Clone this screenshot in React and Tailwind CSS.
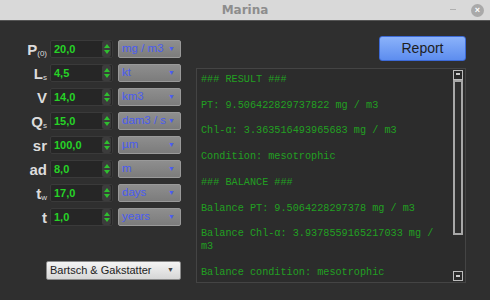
import React from 'react';

const rows = [
  { label: 'P', sub: '(0)', value: '20,0', unit: 'mg / m3' },
  { label: 'L', sub: 's', value: '4,5', unit: 'kt' },
  { label: 'V', sub: '', value: '14,0', unit: 'km3' },
  { label: 'Q', sub: 's', value: '15,0', unit: 'dam3 / s' },
  { label: 'sr', sub: '', value: '100,0', unit: 'µm' },
  { label: 'ad', sub: '', value: '8,0', unit: 'm' },
  { label: 't', sub: 'w', value: '17,0', unit: 'days' },
  { label: 't', sub: '', value: '1,0', unit: 'years' },
];

const lines = [
  '### RESULT ###',
  '',
  'PT: 9.506422829737822 mg / m3',
  '',
  'Chl-α: 3.363516493965683 mg / m3',
  '',
  'Condition: mesotrophic',
  '',
  '### BALANCE ###',
  '',
  'Balance PT: 9.5064228297378 mg / m3',
  '',
  'Balance Chl-α: 3.9378559165217033 mg /',
  'm3',
  '',
  'Balance condition: mesotrophic',
];

function Spin() {
  return (
    <div className="flex flex-col items-center justify-center w-[9px] h-[16px] bg-[#3c3c3c] rounded-[2px] gap-[2px]">
      <div className="w-0 h-0 border-l-[3px] border-r-[3px] border-b-[4px] border-l-transparent border-r-transparent border-b-[#2fbf2f]" />
      <div className="w-0 h-0 border-l-[3px] border-r-[3px] border-t-[4px] border-l-transparent border-r-transparent border-t-[#2fbf2f]" />
    </div>
  );
}

function Row({ label, sub, value, unit }) {
  return (
    <div className="flex items-center h-[18px]">
      <div className="w-[50px] pr-[3px] flex justify-end items-end text-[#dcdcdc] font-bold text-[15px] leading-none">
        <span>{label}</span>
        {sub && <span className="text-[8px] leading-none font-normal mb-[-1px]">{sub}</span>}
      </div>
      <div className="flex items-center justify-between w-[63px] h-[18px] bg-[#262626] border border-[#3a3a3a] rounded-[2px] pl-[3px] pr-[1px]">
        <span className="text-[#26d326] font-bold text-[11px]">{value}</span>
        <Spin />
      </div>
      <div className="ml-[5px] flex items-center justify-between w-[63px] h-[18px] rounded-[2px] border border-[#9a9a9a] bg-gradient-to-b from-[#8e8e8e] to-[#7c7c7c] px-[3px]">
        <span className="text-[#4a5cf0] text-[11.5px] whitespace-nowrap">{unit}</span>
        <span className="text-[#4a5cf0] text-[7px] mr-[2px]">▼</span>
      </div>
    </div>
  );
}

export default function App() {
  return (
    <div className="w-[490px] h-[300px] bg-[#2f2f2f] flex flex-col overflow-hidden" style={{ fontFamily: '"Liberation Sans", Arial, sans-serif' }}>
      <div className="relative h-[21px] bg-[#d9d9d9] border-b-[1px] border-[#555] flex items-center justify-center shrink-0">
        <span className="text-[#8d8d8d] font-bold text-[12px]" style={{ fontFamily: '"DejaVu Sans", sans-serif' }}>Marina</span>
        <span className="absolute left-[450px] top-[9px] w-[6px] h-[1px] bg-[#b0b0b0]" />
        <span className="absolute left-[471px] top-[4px] w-[13px] h-[13px] rounded-full bg-[#a9a9a9] flex items-center justify-center text-white text-[9px] font-bold leading-none">×</span>
      </div>
      <div className="flex flex-1">
        <div className="flex flex-col w-[190px] pt-[19px]">
          <div className="flex flex-col gap-[6px]">
            {rows.map((r, i) => (
              <Row key={i} {...r} />
            ))}
          </div>
          <div className="mt-[35px] ml-[46px] w-[135px] h-[19px] flex items-center justify-between pl-[3px] pr-[4px] rounded-[2px] border border-[#8a8a8a] bg-gradient-to-b from-[#f4f4f4] to-[#d6d6d6]">
            <span className="text-[#222] text-[11px]">Bartsch &amp; Gakstatter</span>
            <span className="text-[#444] text-[7px] mr-[2px]">▼</span>
          </div>
        </div>
        <div className="flex flex-col pt-[15px] pl-[6px]">
          <div className="flex justify-end w-[270px]">
            <button className="w-[87px] h-[25px] rounded-[3px] border border-[#3d6ad6] bg-gradient-to-b from-[#8bb2fa] to-[#5d8def] text-[#1e1e1e] text-[14px]">Report</button>
          </div>
          <div className="mt-[7px] w-[270px] h-[215px] border border-[#444] bg-[#2c2c2c] flex">
            <div className="flex-1 pl-[4px] pt-[5px] text-[#22a022] text-[10.2px] leading-[12.87px] whitespace-pre" style={{ fontFamily: '"Liberation Mono", "Courier New", monospace' }}>
              {lines.map((l, i) => (
                <div key={i} className="h-[12.87px]">{l}</div>
              ))}
            </div>
            <div className="w-[12px] flex flex-col items-center py-[1px] mr-[1px]">
              <div className="w-[10px] h-[10px] border border-[#bcbcbc] bg-[#2a2a2a] flex items-start justify-center">
                <div className="mt-[2px] w-[4px] h-[2px] bg-[#ccc]" />
              </div>
              <div className="w-[10px] h-[155px] border-2 border-[#a8a8a8] bg-[#2f2f2f]" />
              <div className="flex-1" />
              <div className="w-[10px] h-[10px] border border-[#bcbcbc] bg-[#2a2a2a] flex items-center justify-center">
                <div className="w-[4px] h-[2px] bg-[#ccc]" />
              </div>
            </div>
          </div>
        </div>
      </div>
    </div>
  );
}
